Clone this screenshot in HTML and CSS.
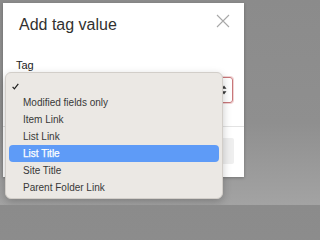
FILE: index.html
```html
<!DOCTYPE html>
<html>
<head>
<meta charset="utf-8">
<link rel="stylesheet" href="styles.css">
</head>
<body>
<div class="dialog">
  <div class="header">
    <div class="title">Add tag value</div>
    <svg class="close" width="14" height="14" viewBox="0 0 14 14"><path d="M1 1L13 13M13 1L1 13" stroke="#a8a8a8" stroke-width="1.1" fill="none"/></svg>
  </div>
  <div class="label">Tag</div>
  <div class="select">
    <svg class="arrows" width="6" height="10" viewBox="0 0 6 10"><path d="M3 0.5L5.5 3.8H0.5Z M3 9.5L5.5 6.2H0.5Z" fill="#3a3a3a"/></svg>
  </div>
  <div class="footer">
    <div class="btn"></div>
  </div>
</div>
<div class="menu">
  <div class="item check"><svg width="7" height="7" viewBox="0 0 7 7"><path d="M0.6 3.8L2.4 5.9L6.3 0.8" stroke="#1e1e1e" stroke-width="1.2" fill="none"/></svg></div>
  <div class="item">Modified fields only</div>
  <div class="item">Item Link</div>
  <div class="item">List Link</div>
  <div class="item sel">List Title</div>
  <div class="item">Site Title</div>
  <div class="item">Parent Folder Link</div>
</div>
</body>
</html>
```
FILE: styles.css
```css
html, body {
  margin: 0;
  padding: 0;
}
body {
  width: 250px;
  height: 205px;
  overflow: hidden;
  background: linear-gradient(#8b8b8b, #8f8f8f 60%, #a3a3a3);
  font-family: "Liberation Sans", Arial, sans-serif;
  position: relative;
}
.dialog {
  margin: 3px 0 0 3px;
  width: 241px;
  height: 174px;
  background: #fff;
  box-shadow: 0 1px 3px rgba(0,0,0,0.25);
  display: flex;
  flex-direction: column;
}
.header {
  display: flex;
  justify-content: space-between;
  align-items: flex-start;
  padding: 12px 14px 0 16px;
}
.title {
  font-size: 16px;
  line-height: 20px;
  color: #323130;
}
.close {
  margin-top: -1px;
  display: block;
}
.label {
  margin: 24px 0 0 13px;
  font-size: 11px;
  line-height: 13px;
  color: #222;
}
.select {
  margin: 5px 11px 0 13px;
  height: 24px;
  border: 1px solid #c8777a;
  border-radius: 3px;
  box-shadow: 0 0 0 1px #f0d4d4;
  display: flex;
  justify-content: flex-end;
  align-items: center;
  padding-right: 5px;
}
.arrows {
  display: block;
}
.footer {
  margin-top: 23px;
  border-top: 1px solid #e3e3e3;
  display: flex;
  justify-content: flex-end;
  padding: 11px 10px 0 0;
}
.btn {
  width: 80px;
  height: 26px;
  background: #efefef;
  border-radius: 2px;
}
.menu {
  position: absolute;
  left: 5px;
  top: 72px;
  width: 210px;
  padding: 4px 3px 2px 3px;
  background: #ebe8e4;
  border: 1px solid #d2cec9;
  border-radius: 6px;
  box-shadow: 0 3px 8px rgba(0,0,0,0.22);
}
.item {
  height: 17px;
  line-height: 17px;
  font-size: 10px;
  color: #383838;
  padding-left: 14px;
  border-radius: 4px;
  white-space: nowrap;
}
.item.check {
  padding-left: 3px;
  display: flex;
  align-items: center;
}
.item.check svg {
  display: block;
  margin-top: 2px;
}
.item.sel {
  background: #5e9bf7;
  color: #fff;
  -webkit-text-stroke: 0.25px #fff;
}
```
